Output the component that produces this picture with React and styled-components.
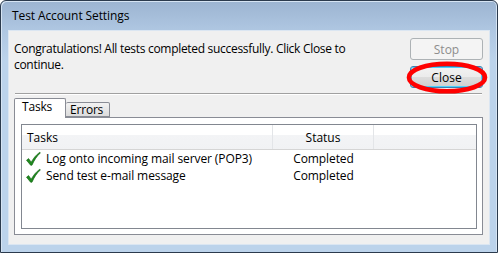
import React from 'react';
import styled, { createGlobalStyle } from 'styled-components';

const GlobalStyle = createGlobalStyle`
  html, body {
    margin: 0;
    padding: 0;
    background: #ffffff;
  }
  body {
    font-family: "Open Sans", "Noto Sans", "Liberation Sans", sans-serif;
    font-size: 12px;
    color: #000;
  }
`;

const tasks = [
  { name: 'Log onto incoming mail server (POP3)', status: 'Completed' },
  { name: 'Send test e-mail message', status: 'Completed' },
];

function Check() {
  return (
    <svg width="16" height="16" viewBox="0 0 16 16">
      <path
        d="M1.5 9.2 L3.6 7.6 L6.2 11.2 C8.4 7.2 11 4 14.8 1.2 L15.4 1.9 C11.8 5.2 9.2 9 7 14.2 L5.6 14.2 Z"
        fill="#1f8a1f"
        stroke="#0d5e0d"
        strokeWidth="0.6"
        strokeLinejoin="round"
      />
    </svg>
  );
}

export default function App() {
  return (
    <>
      <GlobalStyle />
      <Window>
        <TitleBar>Test Account Settings</TitleBar>
        <Client>
          <TopRow>
            <Message>
              Congratulations! All tests completed successfully. Click Close to continue.
            </Message>
            <ButtonCol>
              <Button disabled>Stop</Button>
              <CloseWrap>
                <Button $primary>Close</Button>
                <Marker viewBox="0 0 90 36">
                  <ellipse cx="45" cy="18" rx="41.5" ry="15" fill="none" stroke="#ff0000" strokeWidth="5" />
                </Marker>
              </CloseWrap>
            </ButtonCol>
          </TopRow>
          <Separator />
          <Tabs>
            <TabStrip>
              <Tab $active>Tasks</Tab>
              <Tab>Errors</Tab>
            </TabStrip>
            <Panel>
              <ListView>
                <Header>
                  <HeadCell>Tasks</HeadCell>
                  <HeadCell $center>Status</HeadCell>
                  <HeadCell />
                </Header>
                {tasks.map((t) => (
                  <Row key={t.name}>
                    <NameCell>
                      <Check />
                      <span>{t.name}</span>
                    </NameCell>
                    <StatusCell>{t.status}</StatusCell>
                    <span />
                  </Row>
                ))}
              </ListView>
            </Panel>
          </Tabs>
        </Client>
      </Window>
    </>
  );
}

const Window = styled.div`
  width: 498px;
  height: 253px;
  box-sizing: border-box;
  border: 1px solid #2b3a4d;
  border-radius: 6px 6px 0 0;
  background: linear-gradient(to bottom, #9cb4d1 0px, #afc7e2 30px, #bcd3eb 60px, #bcd3eb 100%);
  padding: 0 7px 7px 7px;
  display: flex;
  flex-direction: column;
  box-shadow: inset 1px 1px 0 #d6e4f3, inset -1px 0 0 #d6e4f3;
`;

const TitleBar = styled.div`
  height: 29px;
  display: flex;
  align-items: center;
  padding-left: 4px;
  padding-bottom: 1px;
  box-sizing: border-box;
  font-size: 12px;
  letter-spacing: -0.1px;
  color: #000;
`;

const Client = styled.div`
  flex: 1;
  background: #f0f0f0;
  border: 1px solid #dbe6f2;
  display: flex;
  flex-direction: column;
  padding: 0 6px 9px 5px;
`;

const TopRow = styled.div`
  display: flex;
  justify-content: space-between;
`;

const Message = styled.div`
  width: 380px;
  padding-top: 10px;
  line-height: 16px;
  letter-spacing: -0.3px;
`;

const ButtonCol = styled.div`
  display: flex;
  flex-direction: column;
  gap: 6px;
  padding-top: 7px;
`;

const Button = styled.button`
  width: 73px;
  height: 22px;
  box-sizing: border-box;
  font-family: inherit;
  font-size: 12px;
  padding: 0;
  border-radius: 3px;
  border: 1px solid ${(p) => (p.$primary ? '#3c7fb1' : '#adb2b5')};
  color: ${(p) => (p.disabled ? '#8d8d8d' : '#000')};
  background: ${(p) =>
    p.disabled
      ? '#f4f4f4'
      : 'linear-gradient(to bottom, #f2f2f2 0%, #ebebeb 50%, #dddddd 51%, #cfcfcf 100%)'};
  box-shadow: ${(p) => (p.$primary ? 'inset 0 0 0 1px #48d1ff' : 'none')};
`;

const CloseWrap = styled.div`
  position: relative;
`;

const Marker = styled.svg`
  position: absolute;
  left: -6px;
  top: -5px;
  width: 86px;
  height: 33px;
  overflow: visible;
  pointer-events: none;
`;

const Separator = styled.div`
  margin: 5px 1px 0 1px;
  height: 1px;
  background: #a0a0a0;
  box-shadow: 0 1px 0 #ffffff;
`;

const Tabs = styled.div`
  flex: 1;
  display: flex;
  flex-direction: column;
  margin-top: 5px;
  padding-left: 0;
`;

const TabStrip = styled.div`
  display: flex;
  align-items: flex-end;
  height: 19px;
  position: relative;
  z-index: 1;
  margin-bottom: -1px;
`;

const Tab = styled.div`
  box-sizing: border-box;
  width: ${(p) => (p.$active ? '52px' : '44px')};
  height: ${(p) => (p.$active ? '20px' : '15px')};
  padding: ${(p) => (p.$active ? '0 0 4px 7px' : '0 0 0 4px')};
  margin-bottom: ${(p) => (p.$active ? '0' : '1px')};
  display: flex;
  align-items: center;
  letter-spacing: -0.2px;
  border: 1px solid #898c95;
  border-bottom: ${(p) => (p.$active ? 'none' : '1px solid #898c95')};
  border-left: ${(p) => (p.$active ? '1px solid #898c95' : 'none')};
  border-radius: 2px 2px 0 0;
  background: ${(p) =>
    p.$active ? '#ffffff' : 'linear-gradient(to bottom, #f2f2f2, #dcdcdc)'};
`;

const Panel = styled.div`
  flex: 1;
  background: #ffffff;
  border: 1px solid #898c95;
  padding: 6px 5px 5px 6px;
  display: flex;
`;

const ListView = styled.div`
  flex: 1;
  border: 1px solid #828790;
  background: #fff;
`;

const Header = styled.div`
  display: grid;
  grid-template-columns: 251px 101px 1fr;
  height: 24px;
  background: linear-gradient(to bottom, #ffffff 0%, #ffffff 40%, #f3f4f6 41%, #f1f2f4 100%);
  border-bottom: 1px solid #d5d5d5;
`;

const HeadCell = styled.div`
  display: flex;
  align-items: center;
  justify-content: ${(p) => (p.$center ? 'center' : 'flex-start')};
  padding-left: ${(p) => (p.$center ? '0' : '5px')};
  border-right: 1px solid #e3e5e8;
  &:last-child {
    border-right: none;
  }
`;

const Row = styled.div`
  display: grid;
  grid-template-columns: 251px 101px 1fr;
  height: 17px;
  align-items: center;
  letter-spacing: -0.1px;
  &:first-of-type {
    margin-top: 1px;
  }
`;

const NameCell = styled.div`
  display: flex;
  align-items: center;
  gap: 5px;
  padding-left: 3px;
`;

const StatusCell = styled.div`
  text-align: center;
`;
